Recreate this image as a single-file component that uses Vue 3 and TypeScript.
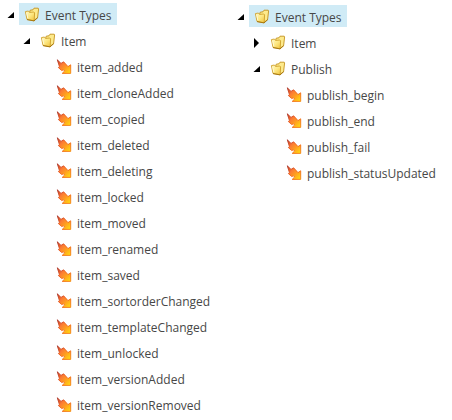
<script setup lang="ts">
import { reactive } from 'vue'

interface TreeNode {
  label: string
  children?: TreeNode[]
}

interface Row {
  key: string
  label: string
  level: number
  folder: boolean
}

const itemFolder: TreeNode = {
  label: 'Item',
  children: [
    'item_added',
    'item_cloneAdded',
    'item_copied',
    'item_deleted',
    'item_deleting',
    'item_locked',
    'item_moved',
    'item_renamed',
    'item_saved',
    'item_sortorderChanged',
    'item_templateChanged',
    'item_unlocked',
    'item_versionAdded',
    'item_versionRemoved',
  ].map((label) => ({ label })),
}

const publishFolder: TreeNode = {
  label: 'Publish',
  children: ['publish_begin', 'publish_end', 'publish_fail', 'publish_statusUpdated'].map(
    (label) => ({ label }),
  ),
}

const trees = reactive([
  {
    id: 'items',
    root: { label: 'Event Types', children: [itemFolder] } as TreeNode,
    collapsed: [] as string[],
    selected: '/Event Types',
  },
  {
    id: 'publishing',
    root: { label: 'Event Types', children: [itemFolder, publishFolder] } as TreeNode,
    collapsed: ['/Event Types/Item'],
    selected: '/Event Types',
  },
])

type Tree = (typeof trees)[number]

function visibleRows(node: TreeNode, collapsed: string[], level = 1, parent = ''): Row[] {
  const key = `${parent}/${node.label}`
  const row: Row = { key, label: node.label, level, folder: !!node.children }
  if (!node.children || collapsed.includes(key)) return [row]
  return [row, ...node.children.flatMap((c) => visibleRows(c, collapsed, level + 1, key))]
}

function toggle(tree: Tree, key: string) {
  tree.collapsed = tree.collapsed.includes(key)
    ? tree.collapsed.filter((k) => k !== key)
    : [...tree.collapsed, key]
}
</script>

<template>
  <svg class="defs" width="0" height="0" aria-hidden="true">
    <defs>
      <linearGradient id="bolt-fill" x1="0" y1="0" x2="1" y2="1">
        <stop offset="0.1" stop-color="#d8401c" />
        <stop offset="0.35" stop-color="#fb7a34" />
        <stop offset="0.6" stop-color="#ff9c20" />
        <stop offset="0.9" stop-color="#ffd012" />
      </linearGradient>
      <linearGradient id="bolt-edge" x1="0" y1="0" x2="1" y2="1">
        <stop offset="0" stop-color="#a8382e" />
        <stop offset="0.45" stop-color="#ee5a1c" />
        <stop offset="1" stop-color="#f58414" />
      </linearGradient>
      <linearGradient id="folder-front" x1="0" y1="0" x2="1" y2="1">
        <stop offset="0" stop-color="#fff9c4" />
        <stop offset="0.5" stop-color="#fde884" />
        <stop offset="1" stop-color="#f0c23a" />
      </linearGradient>
    </defs>
  </svg>
  <main class="trees">
    <ul v-for="tree in trees" :key="tree.id" class="tree" :class="tree.id">
      <li
        v-for="row in visibleRows(tree.root, tree.collapsed)"
        :key="row.key"
        class="row"
        :class="`level-${row.level}`"
      >
        <button
          v-if="row.folder"
          type="button"
          class="toggle"
          :aria-label="`Toggle ${row.label}`"
          :aria-expanded="!tree.collapsed.includes(row.key)"
          @click="toggle(tree, row.key)"
        >
          <svg width="8" height="10" viewBox="0 0 8 10" aria-hidden="true">
            <path v-if="tree.collapsed.includes(row.key)" d="M1 0 L6 5 L1 10 Z" />
            <path v-else d="M7 2 V8 H0.5 Z" />
          </svg>
        </button>
        <span v-else class="toggle"></span>
        <button
          type="button"
          class="node"
          :class="{ selected: tree.selected === row.key }"
          @click="tree.selected = row.key"
        >
          <svg v-if="row.folder" class="icon" viewBox="0 0 16 16" aria-hidden="true">
            <path
              d="M5.5 6 L6.2 3.2 L9 2.8 L10 1.2 L14.2 1.2 L14.6 2 L13.6 10.6 L10 13.4 L7 12 Z"
              fill="#fdea8c"
              stroke="#c4921c"
              stroke-width="0.9"
            />
            <path
              d="M1.4 4.6 L4.4 4 L5.6 5.4 L9.8 5 L10.6 5.8 L10.2 13.8 L3 12.4 Z"
              fill="url(#folder-front)"
              stroke="#cfa02a"
              stroke-width="0.9"
            />
            <path d="M3 12.6 L10 13.9 L13.8 10.6" fill="none" stroke="#a8780f" />
            <path d="M2.6 5.8 L3.8 11.4" fill="none" stroke="#fffde8" stroke-width="0.8" />
          </svg>
          <svg v-else class="icon" viewBox="0 0 16 16" aria-hidden="true">
            <path
              d="M1.3 0.8 L5 4.4 L7.6 2.8 L12 7.6 L14.7 5.8 L14.7 14.4 L6.2 14.4 L8.6 12 L7.4 10.8 L5.8 11.6 L2.4 8.6 L3.4 7.4 Z"
              fill="url(#bolt-fill)"
              stroke="url(#bolt-edge)"
              stroke-width="0.9"
              stroke-linejoin="round"
            />
          </svg>
          <span class="label">{{ row.label }}</span>
        </button>
      </li>
    </ul>
  </main>
</template>

<style>
body {
  margin: 0;
  background: #fff;
}
</style>

<style scoped>
.defs {
  position: absolute;
}

.trees {
  display: grid;
  grid-template-columns: 1fr 1fr;
  gap: 8px;
  font-family: 'Open Sans', 'Noto Sans', sans-serif;
  font-size: 12px;
  line-height: 18px;
  color: #474747;
}

.tree {
  display: flex;
  flex-direction: column;
  gap: 4px;
  min-width: 0;
  margin: 0;
  padding: 3px 0 0 7px;
  list-style: none;
}

.publishing {
  padding-top: 5px;
}

.row {
  display: flex;
  align-items: center;
  height: 22px;
}

.level-2 {
  padding-left: 16px;
}

.level-3 {
  padding-left: 32px;
}

.toggle,
.node {
  box-sizing: border-box;
  display: flex;
  flex: none;
  align-items: center;
  height: 22px;
  border: 0;
  padding: 2px 0 0;
  background: none;
  font: inherit;
  color: inherit;
  cursor: pointer;
}

.toggle {
  width: 12px;
}

.node {
  gap: 5px;
  padding: 2px 5px 0;
  white-space: nowrap;
}

.node.selected {
  background: #d0ebf6;
}

.label {
  padding-top: 2px;
}

.icon {
  width: 16px;
  height: 16px;
}
</style>
